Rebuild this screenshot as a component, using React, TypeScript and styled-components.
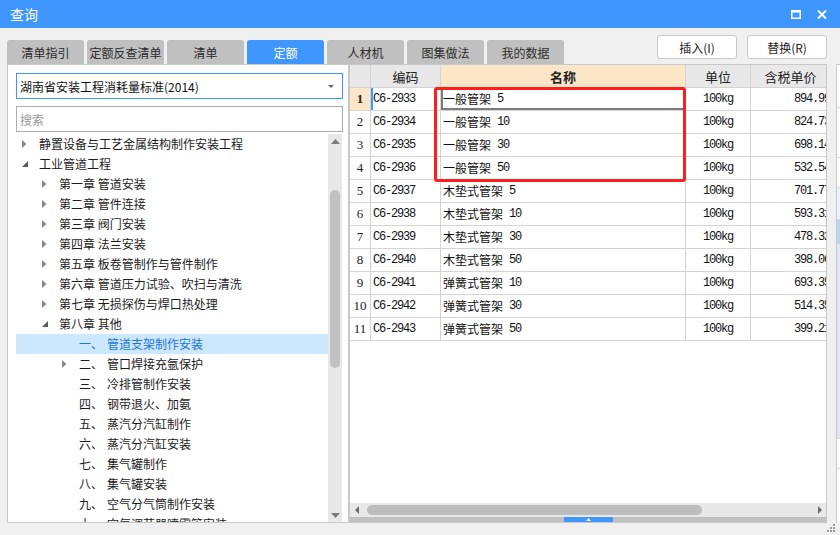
import React from 'react';
import styled, { createGlobalStyle } from 'styled-components';

const GlobalStyle = createGlobalStyle`
  html, body { margin: 0; padding: 0; background: #f0f0f0; }
  body { font-family: "Noto Sans CJK SC", "Microsoft YaHei", sans-serif; }
  * { box-sizing: border-box; }
`;

const Window = styled.div`
  position: relative;
  width: 840px;
  height: 535px;
  overflow: hidden;
  background: #f0f0f0;
  display: flex;
  flex-direction: column;
`;

const TitleBar = styled.div`
  height: 28px;
  flex-shrink: 0;
  background: #4096ff;
  color: #fff;
  display: flex;
  align-items: center;
  padding: 0 13px 0 10px;
  font-size: 14px;
`;

const Title = styled.div`
  flex: 1;
  line-height: 28px;
`;

const WinButtons = styled.div`
  display: flex;
  gap: 16px;
  align-items: center;
`;

const Toolbar = styled.div`
  height: 36px;
  flex-shrink: 0;
  display: flex;
  align-items: flex-end;
  padding: 0 13px 0 7px;
`;

const Tabs = styled.div`
  flex: 1;
  display: flex;
  gap: 3px;
`;

const Tab = styled.div<{ $active?: boolean }>`
  width: 77px;
  height: 24px;
  border-radius: 3px 3px 0 0;
  background: ${p => (p.$active ? '#4096ff' : '#c0c0c0')};
  color: ${p => (p.$active ? '#fff' : '#2b2b2b')};
  font-size: 12px;
  display: flex;
  align-items: center;
  justify-content: center;
`;

const Actions = styled.div`
  align-self: flex-start;
  margin-top: 7px;
  display: flex;
  gap: 10px;
`;

const ActionButton = styled.button`
  width: 80px;
  height: 24px;
  padding: 0;
  background: #fff;
  border: 1px solid #c8c8c8;
  border-radius: 3px;
  color: #222;
  font: 12px "Noto Sans CJK SC", sans-serif;
`;

const Main = styled.div`
  height: 459px;
  display: flex;
  padding-left: 7px;
  overflow: hidden;
`;

const LeftPanel = styled.div`
  width: 342px;
  flex-shrink: 0;
  border: 1px solid #c8c8c8;
  background: #fff;
  display: flex;
  flex-direction: column;
  padding: 8px 5px 0 8px;
`;

const Select = styled.div`
  height: 26px;
  border: 1px solid #4096ff;
  display: flex;
  align-items: center;
  padding: 0 8px 0 3px;
  font-size: 12px;
  color: #111;
  > span { flex: 1; }
`;

const Search = styled.div`
  height: 26px;
  margin-top: 7px;
  border: 1px solid #ababab;
  display: flex;
  align-items: center;
  padding-left: 3px;
  font-size: 12px;
  color: #9a9a9a;
`;

const TreeWrap = styled.div`
  flex: 1;
  margin-top: 2px;
  display: flex;
  overflow: hidden;
`;

const TreeList = styled.div`
  flex: 1;
  overflow: hidden;
`;

const TreeRow = styled.div<{ $level: number; $selected?: boolean }>`
  height: 20px;
  display: flex;
  align-items: center;
  padding-left: ${p => p.$level * 20}px;
  background: ${p => (p.$selected ? '#cce8ff' : 'transparent')};
  color: ${p => (p.$selected ? '#1f74d6' : '#1c1c1c')};
  font-size: 12px;
  line-height: 20px;
  white-space: nowrap;
`;

const Toggle = styled.span`
  width: 23px;
  flex-shrink: 0;
  display: flex;
  align-items: center;
  padding-left: 6px;
`;

const ItemNo = styled.span`
  width: 28px;
  flex-shrink: 0;
`;

const VScroll = styled.div`
  width: 14px;
  flex-shrink: 0;
  margin-right: 1px;
  background: #e8e8e8;
  display: flex;
  flex-direction: column;
  align-items: center;
`;

const ScrollArrow = styled.div`
  height: 14px;
  display: flex;
  align-items: center;
  justify-content: center;
`;

const VThumb = styled.div`
  width: 10px;
  height: 178px;
  margin-top: 42px;
  border-radius: 5px;
  background: #c1c1c1;
`;

const Spacer = styled.div`
  flex: 1;
`;

const RightPanel = styled.div`
  width: 478px;
  flex-shrink: 0;
  border: 1px solid #c8c8c8;
  background: #fff;
  display: flex;
  flex-direction: column;
`;

const GridArea = styled.div`
  position: relative;
  flex: 1;
  overflow: hidden;
`;

const Grid = styled.div`
  width: max-content;
  display: grid;
  grid-template-columns: 21px 70px 245px 65px 80px;
  grid-auto-rows: 23px;
`;

const HeadCell = styled.div<{ $accent?: boolean }>`
  border-right: 1px solid #d4d4d4;
  border-bottom: 1px solid #d4d4d4;
  background: ${p => (p.$accent ? '#fde6c8' : '#e8e8e8')};
  font-size: 13px;
  font-weight: ${p => (p.$accent ? 700 : 400)};
  color: #222;
  display: flex;
  align-items: center;
  justify-content: center;
`;

const NoCell = styled.div<{ $current?: boolean }>`
  border-right: 1px solid #d4d4d4;
  border-bottom: 1px solid #d4d4d4;
  background: ${p => (p.$current ? '#fde6c8' : '#fff')};
  font: ${p => (p.$current ? 700 : 400)} 13px "Liberation Serif", serif;
  color: #222;
  display: flex;
  align-items: center;
  justify-content: center;
`;

const Cell = styled.div<{ $align?: 'left' | 'center' | 'right'; $mono?: boolean; $mark?: 'blue' | 'focus' }>`
  border-right: 1px solid #d4d4d4;
  border-bottom: 1px solid #d4d4d4;
  display: flex;
  align-items: center;
  justify-content: ${p => (p.$align === 'center' ? 'center' : p.$align === 'right' ? 'flex-end' : 'flex-start')};
  padding: 0 ${p => (p.$align === 'right' ? '0' : '2px')} 0 2px;
  font-family: "Liberation Mono", "Noto Sans CJK SC", monospace;
  font-size: 12px;
  letter-spacing: ${p => (p.$mono ? '-1.2px' : '0')};
  color: #111;
  white-space: nowrap;
  box-shadow: ${p =>
    p.$mark === 'blue'
      ? 'inset 2px 0 0 #4096ff'
      : p.$mark === 'focus'
      ? 'inset 2px 0 0 #7c7c7c, inset 0 -2px 0 #7c7c7c'
      : 'none'};
`;

const Spec = styled.span`
  margin-left: 6px;
  letter-spacing: -1.2px;
`;

const Highlight = styled.div`
  position: absolute;
  left: 84px;
  top: 22px;
  width: 252px;
  height: 95px;
  border: 3px solid #ff1e1e;
  border-radius: 3px;
  pointer-events: none;
`;

const HScroll = styled.div`
  height: 14px;
  flex-shrink: 0;
  background: #e8e8e8;
  display: flex;
  align-items: center;
  padding: 0 4px 0 5px;
`;

const HThumb = styled.div`
  width: 335px;
  height: 10px;
  margin-left: 8px;
  border-radius: 5px;
  background: #bdbdbd;
`;

const BottomBar = styled.div`
  height: 5px;
  flex-shrink: 0;
  background: #c0c0c0;
  display: flex;
  justify-content: center;
`;

const Handle = styled.div`
  width: 49px;
  background: #4096ff;
  display: flex;
  align-items: center;
  justify-content: center;
`;

const SidePanel = styled.div`
  width: 10px;
  margin-left: 9px;
  flex-shrink: 0;
  border-left: 1px solid #c8c8c8;
  border-top: 1px solid #c8c8c8;
  background: #fff;
  display: flex;
  flex-direction: column;
`;

const SideRow = styled.div<{ $h: number; $bg?: string }>`
  height: ${p => p.$h}px;
  flex-shrink: 0;
  background: ${p => p.$bg || '#fff'};
  border-bottom: 1px solid #d8d8d8;
`;

const Grip = styled.svg`
  position: absolute;
  right: 5px;
  bottom: 3px;
`;

const Collapsed = () => (
  <svg width="5" height="8" viewBox="0 0 5 8">
    <polygon points="0,0 4.5,4 0,8" fill="#888" />
  </svg>
);

const Expanded = () => (
  <svg width="6" height="6" viewBox="0 0 6 6">
    <polygon points="6,0 6,6 0,6" fill="#5a5a5a" />
  </svg>
);

type Node = { level: number; text: string; no?: string; state?: 'open' | 'closed'; selected?: boolean };

const tree: Node[] = [
  { level: 0, text: '静置设备与工艺金属结构制作安装工程', state: 'closed' },
  { level: 0, text: '工业管道工程', state: 'open' },
  { level: 1, text: '第一章 管道安装', state: 'closed' },
  { level: 1, text: '第二章 管件连接', state: 'closed' },
  { level: 1, text: '第三章 阀门安装', state: 'closed' },
  { level: 1, text: '第四章 法兰安装', state: 'closed' },
  { level: 1, text: '第五章 板卷管制作与管件制作', state: 'closed' },
  { level: 1, text: '第六章 管道压力试验、吹扫与清洗', state: 'closed' },
  { level: 1, text: '第七章 无损探伤与焊口热处理', state: 'closed' },
  { level: 1, text: '第八章 其他', state: 'open' },
  { level: 2, no: '一、', text: '管道支架制作安装', selected: true },
  { level: 2, no: '二、', text: '管口焊接充氩保护', state: 'closed' },
  { level: 2, no: '三、', text: '冷排管制作安装' },
  { level: 2, no: '四、', text: '钢带退火、加氨' },
  { level: 2, no: '五、', text: '蒸汽分汽缸制作' },
  { level: 2, no: '六、', text: '蒸汽分汽缸安装' },
  { level: 2, no: '七、', text: '集气罐制作' },
  { level: 2, no: '八、', text: '集气罐安装' },
  { level: 2, no: '九、', text: '空气分气筒制作安装' },
  { level: 2, no: '十、', text: '空气调节器喷雾管安装' },
];

const rows = [
  ['C6-2933', '一般管架', '5', '894.99'],
  ['C6-2934', '一般管架', '10', '824.73'],
  ['C6-2935', '一般管架', '30', '698.14'],
  ['C6-2936', '一般管架', '50', '532.54'],
  ['C6-2937', '木垫式管架', '5', '701.77'],
  ['C6-2938', '木垫式管架', '10', '593.31'],
  ['C6-2939', '木垫式管架', '30', '478.32'],
  ['C6-2940', '木垫式管架', '50', '398.06'],
  ['C6-2941', '弹簧式管架', '10', '693.35'],
  ['C6-2942', '弹簧式管架', '30', '514.35'],
  ['C6-2943', '弹簧式管架', '50', '399.21'],
];

const tabs = ['清单指引', '定额反查清单', '清单', '定额', '人材机', '图集做法', '我的数据'];

export default () => {
  return (
    <>
      <GlobalStyle />
      <Window>
        <TitleBar>
          <Title>查询</Title>
          <WinButtons>
            <svg width="10" height="9" viewBox="0 0 10 9">
              <rect x="0.75" y="1.25" width="8.5" height="7" fill="none" stroke="#fff" strokeWidth="1.5" />
              <rect x="0" y="0" width="10" height="2.5" fill="#fff" />
            </svg>
            <svg width="10" height="9" viewBox="0 0 10 9">
              <path d="M1 0.5 L9 8.5 M9 0.5 L1 8.5" stroke="#fff" strokeWidth="2" />
            </svg>
          </WinButtons>
        </TitleBar>

        <Toolbar>
          <Tabs>
            {tabs.map(t => (
              <Tab key={t} $active={t === '定额'}>
                {t}
              </Tab>
            ))}
          </Tabs>
          <Actions>
            <ActionButton>插入(I)</ActionButton>
            <ActionButton>替换(R)</ActionButton>
          </Actions>
        </Toolbar>

        <Main>
          <LeftPanel>
            <Select>
              <span>湖南省安装工程消耗量标准(2014)</span>
              <svg width="6" height="3" viewBox="0 0 6 3">
                <polygon points="0,0 6,0 3,3" fill="#6a6a6a" />
              </svg>
            </Select>
            <Search>搜索</Search>
            <TreeWrap>
              <TreeList>
                {tree.map((n, i) => (
                  <TreeRow key={i} $level={n.level} $selected={n.selected}>
                    <Toggle>
                      {n.state === 'closed' && <Collapsed />}
                      {n.state === 'open' && <Expanded />}
                    </Toggle>
                    {n.no && <ItemNo>{n.no}</ItemNo>}
                    <span>{n.text}</span>
                  </TreeRow>
                ))}
              </TreeList>
              <VScroll>
                <ScrollArrow>
                  <svg width="9" height="5" viewBox="0 0 9 5">
                    <polygon points="4.5,0 9,5 0,5" fill="#7d7d7d" />
                  </svg>
                </ScrollArrow>
                <VThumb />
                <Spacer />
                <ScrollArrow>
                  <svg width="9" height="5" viewBox="0 0 9 5">
                    <polygon points="0,0 9,0 4.5,5" fill="#7d7d7d" />
                  </svg>
                </ScrollArrow>
              </VScroll>
            </TreeWrap>
          </LeftPanel>

          <RightPanel>
            <GridArea>
              <Grid>
                <HeadCell />
                <HeadCell>编码</HeadCell>
                <HeadCell $accent>名称</HeadCell>
                <HeadCell>单位</HeadCell>
                <HeadCell>含税单价</HeadCell>
                {rows.map((r, i) => (
                  <React.Fragment key={r[0]}>
                    <NoCell $current={i === 0}>{i + 1}</NoCell>
                    <Cell $mono $mark={i === 0 ? 'blue' : undefined}>
                      {r[0]}
                    </Cell>
                    <Cell $mark={i === 0 ? 'focus' : undefined}>
                      {r[1]}
                      <Spec>{r[2]}</Spec>
                    </Cell>
                    <Cell $mono $align="center">
                      100kg
                    </Cell>
                    <Cell $mono $align="right">
                      {r[3]}
                    </Cell>
                  </React.Fragment>
                ))}
              </Grid>
              <Highlight />
            </GridArea>
            <HScroll>
              <svg width="4" height="8" viewBox="0 0 4 8">
                <polygon points="4,0 4,8 0,4" fill="#6f6f6f" />
              </svg>
              <HThumb />
              <Spacer />
              <svg width="4" height="8" viewBox="0 0 4 8">
                <polygon points="0,0 4,4 0,8" fill="#6f6f6f" />
              </svg>
            </HScroll>
            <BottomBar>
              <Handle>
                <svg width="5" height="3" viewBox="0 0 5 3">
                  <polygon points="2.5,0 5,3 0,3" fill="#fff" />
                </svg>
              </Handle>
            </BottomBar>
          </RightPanel>

          <SidePanel>
            <SideRow $h={43} />
            <SideRow $h={50} />
            <SideRow $h={30} />
            <SideRow $h={32} $bg="#eaf2fd" />
            <SideRow $h={24} $bg="#b9d7f7" />
            <SideRow $h={195} $bg="#dde9fb" />
            <SideRow $h={30} />
          </SidePanel>
        </Main>

        <Grip width="9" height="9" viewBox="0 0 9 9">
          <rect x="7" y="1" width="2" height="2" fill="#9c9c9c" />
          <rect x="4" y="4" width="2" height="2" fill="#9c9c9c" />
          <rect x="7" y="4" width="2" height="2" fill="#9c9c9c" />
          <rect x="1" y="7" width="2" height="2" fill="#9c9c9c" />
          <rect x="4" y="7" width="2" height="2" fill="#9c9c9c" />
          <rect x="7" y="7" width="2" height="2" fill="#9c9c9c" />
        </Grip>
      </Window>
    </>
  );
};
